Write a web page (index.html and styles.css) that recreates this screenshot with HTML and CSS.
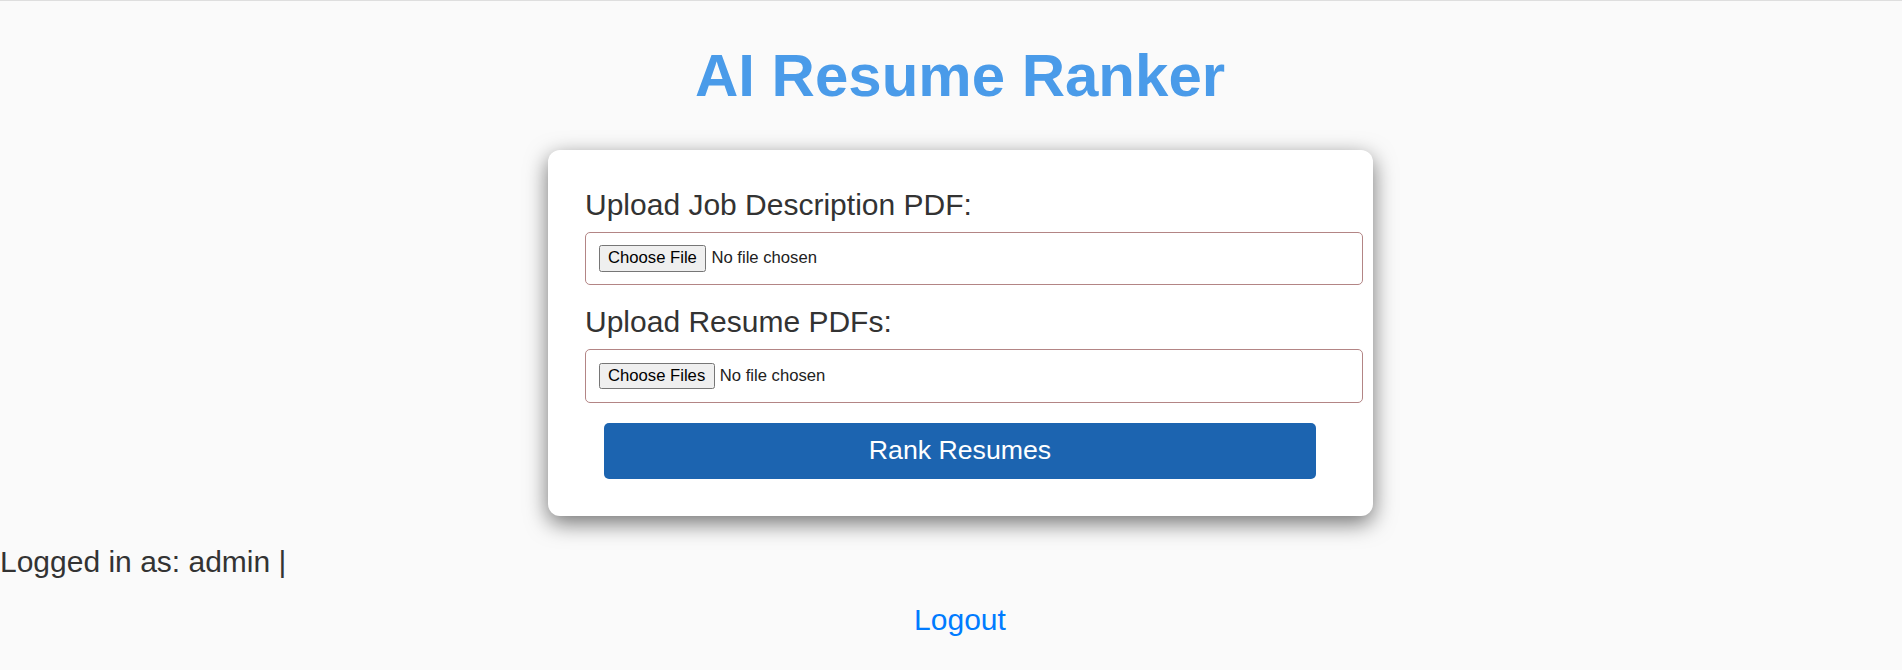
FILE: index.html
```html
<!DOCTYPE html>
<html lang="en">
<head>
<meta charset="utf-8">
<title>AI Resume Ranker</title>
<link rel="stylesheet" href="styles.css">
</head>
<body>
<div class="main">
  <h1 class="title">AI Resume Ranker</h1>
  <form class="card">
    <label class="field-label" for="jd">Upload Job Description PDF:</label>
    <input class="file-input" type="file" id="jd" accept=".pdf">
    <label class="field-label" for="resumes">Upload Resume PDFs:</label>
    <input class="file-input" type="file" id="resumes" accept=".pdf" multiple>
    <button class="submit" type="button">Rank Resumes</button>
  </form>
</div>
<p class="logged">Logged in as: admin |</p>
<a class="logout" href="#">Logout</a>
</body>
</html>
```
FILE: styles.css
```css
html, body {
  margin: 0;
  padding: 0;
}
body {
  background: #fafafa;
  border-top: 1px solid #dedede;
  font-family: "Liberation Sans", Arial, sans-serif;
  color: #333333;
  overflow: hidden;
}
.main {
  padding-left: 18px;
  text-align: center;
}
.title {
  margin: 40px 0 40px;
  font-size: 60px;
  font-weight: bold;
  line-height: normal;
  color: #4a9be9;
}
.card {
  box-sizing: border-box;
  width: 825px;
  margin: 0 auto;
  padding: 37.5px;
  background: #ffffff;
  border-radius: 12px;
  box-shadow: 0 7px 22px rgba(0, 0, 0, 0.55);
  text-align: left;
}
.field-label {
  display: block;
  font-size: 30px;
  line-height: normal;
  color: #333333;
  margin-bottom: 10px;
}
.file-input {
  zoom: 1.25;
  display: block;
  box-sizing: border-box;
  width: 622px;
  padding: 10px;
  margin: 0 0 16px;
  border: 1px solid #b38585;
  border-radius: 4px;
  background: #ffffff;
  font-family: "Liberation Sans", Arial, sans-serif;
  font-size: 13.33px;
  color: #222222;
}
.submit {
  display: block;
  width: 712px;
  height: 56px;
  margin: 0 auto;
  border: none;
  border-radius: 5px;
  background: #1c64b0;
  color: #ffffff;
  font-family: "Liberation Sans", Arial, sans-serif;
  font-size: 26.7px;
  cursor: pointer;
}
.logged {
  margin: 29px 0 0;
  font-size: 30px;
  line-height: normal;
  color: #333333;
}
.logout {
  display: block;
  margin: 24px 0 0 18px;
  text-align: center;
  font-size: 30px;
  line-height: normal;
  color: #007bff;
  text-decoration: none;
}
```
